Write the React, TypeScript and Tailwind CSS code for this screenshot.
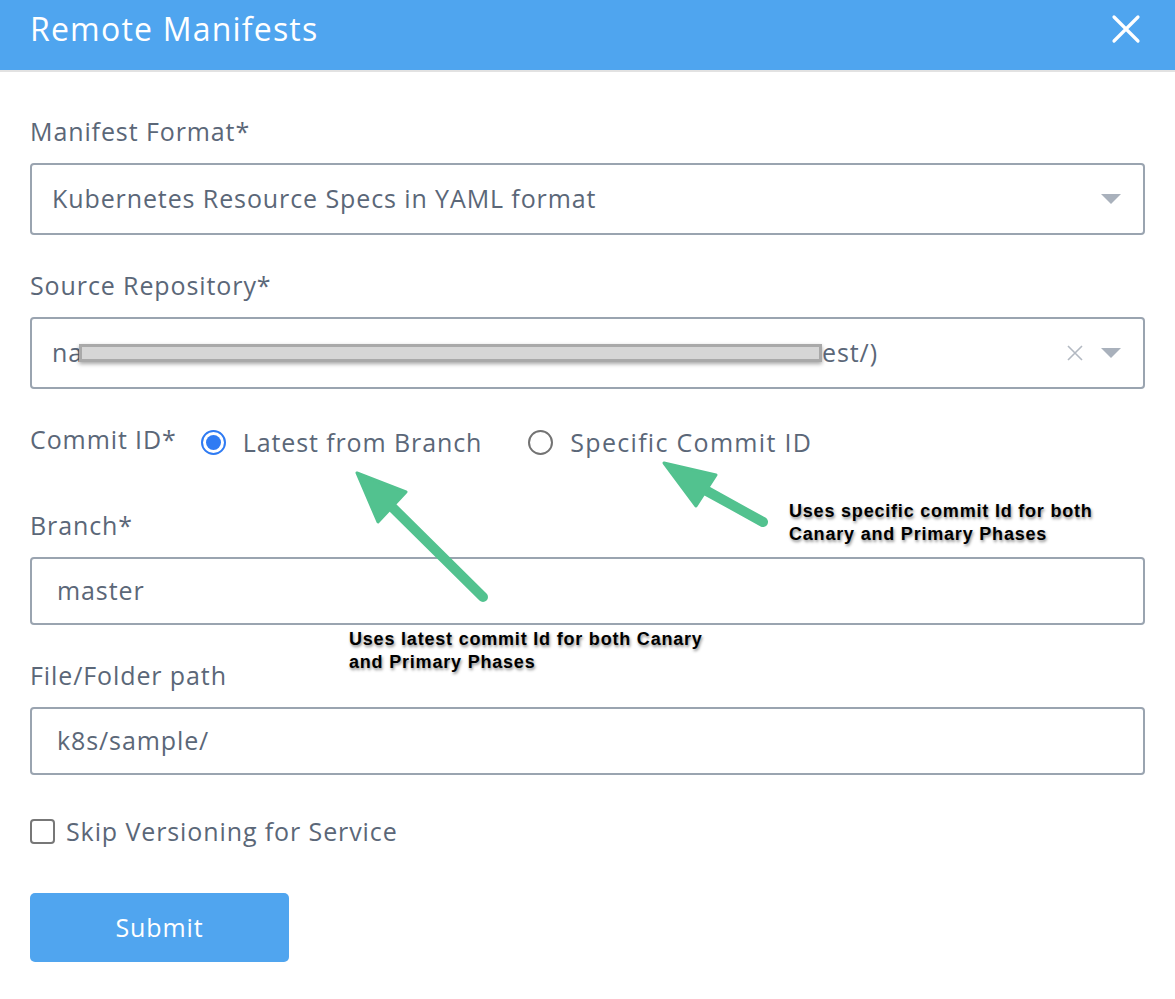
import React from "react";

const font = { fontFamily: "'Open Sans', Lato, sans-serif" };

function Caret() {
  return (
    <svg width="20" height="10" viewBox="0 0 20 10">
      <path d="M0 0 L20 0 L10 10 Z" fill="#a9b1bc" />
    </svg>
  );
}

export default function App() {
  return (
    <div className="w-[1175px] h-[999px] bg-white relative overflow-hidden" style={font}>
      <div className="h-[70px] bg-[#4fa5ef] flex items-center justify-between pl-[30px] pr-[34px]">
        <div className="text-white text-[32px] tracking-[1.2px] leading-none -mt-[12px]">Remote Manifests</div>
        <svg width="30" height="30" viewBox="0 0 30 30" className="-mt-[12px]">
          <path d="M3 3 L27 27 M27 3 L3 27" stroke="white" strokeWidth="3.2" strokeLinecap="round" />
        </svg>
      </div>
      <div className="h-[2px] bg-[#e2e2e2]" />

      <div className="px-[30px] pr-[30px] text-[#5b6778] text-[25px] tracking-[0.9px]">
        <div className="pt-[43px] h-[91px] leading-[32px]">Manifest Format*</div>
        <div className="h-[72px] border-2 border-[#9aa4b0] rounded-[4px] flex items-center pl-[20px] pr-[22px] justify-between">
          <span>Kubernetes Resource Specs in YAML format</span>
          <Caret />
        </div>

        <div className="pt-[34px] h-[82px] leading-[32px]">Source Repository*</div>
        <div className="h-[72px] border-2 border-[#9aa4b0] rounded-[4px] flex items-center pl-[20px] pr-[22px] justify-between">
          <div className="flex items-center">
            <span>na</span>
            <div className="-ml-[4px] w-[743px] h-[18px] bg-[#d6d6d6] border-[3px] border-[#a9a9a9] shadow-[0_2px_4px_rgba(0,0,0,0.35)]" />
            <span>est/)</span>
          </div>
          <div className="flex items-center gap-[18px]">
            <svg width="16" height="16" viewBox="0 0 16 16">
              <path d="M1 1 L15 15 M15 1 L1 15" stroke="#b3b9c2" strokeWidth="1.6" />
            </svg>
            <Caret />
          </div>
        </div>

        <div className="flex items-center mt-[37px] h-[32px]">
          <span className="leading-[32px] -mt-[6px]">Commit ID*</span>
          <div className="ml-[24px] w-[25px] h-[25px] rounded-full border-2 border-[#2f7bf3] flex items-center justify-center">
            <div className="w-[15px] h-[15px] rounded-full bg-[#2f7bf3]" />
          </div>
          <span className="ml-[17px] leading-[32px]">Latest from Branch</span>
          <div className="ml-[46px] w-[25px] h-[25px] rounded-full border-2 border-[#737373]" />
          <span className="ml-[17px] leading-[32px] tracking-[1.3px]">Specific Commit ID</span>
        </div>

        <div className="pt-[51px] h-[99px] leading-[32px]">Branch*</div>
        <div className="h-[68px] border-2 border-[#9aa4b0] rounded-[4px] flex items-center pl-[25px]">master</div>

        <div className="pt-[34px] h-[82px] leading-[32px]">File/Folder path</div>
        <div className="h-[68px] border-2 border-[#9aa4b0] rounded-[4px] flex items-center pl-[25px]">k8s/sample/</div>

        <div className="flex items-center mt-[40px] h-[32px]">
          <div className="w-[25px] h-[25px] rounded-[4px] border-2 border-[#777777]" />
          <span className="ml-[11px] leading-[32px]">Skip Versioning for Service</span>
        </div>

        <div className="mt-[46px] w-[259px] h-[69px] rounded-[5px] bg-[#50a5ef] flex items-center justify-center text-white text-[25px]">
          Submit
        </div>
      </div>

      <svg className="absolute left-0 top-0 pointer-events-none" width="1175" height="999">
        <path d="M392 507 L483 597" stroke="#52c28f" strokeWidth="10" strokeLinecap="round" />
        <path d="M357 473 L406 492 L378 522 Z" fill="#52c28f" stroke="#52c28f" strokeWidth="3" strokeLinejoin="round" />
        <path d="M705 490 L763 522" stroke="#52c28f" strokeWidth="10" strokeLinecap="round" />
        <path d="M664 463 L716 475 L696 506 Z" fill="#52c28f" stroke="#52c28f" strokeWidth="3" strokeLinejoin="round" />
      </svg>

      <div
        className="absolute left-[349px] top-[628px] text-black font-bold text-[18px] tracking-[0.8px] leading-[23px] [text-shadow:1px_2px_3px_rgba(0,0,0,0.45)]"
        style={{ fontFamily: "'Liberation Sans', Arial, sans-serif" }}
      >
        <div>Uses latest commit Id for both Canary</div>
        <div>and Primary Phases</div>
      </div>
      <div
        className="absolute left-[789px] top-[500px] text-black font-bold text-[18px] tracking-[0.8px] leading-[23px] [text-shadow:1px_2px_3px_rgba(0,0,0,0.45)]"
        style={{ fontFamily: "'Liberation Sans', Arial, sans-serif" }}
      >
        <div>Uses specific commit Id for both</div>
        <div>Canary and Primary Phases</div>
      </div>
    </div>
  );
}
